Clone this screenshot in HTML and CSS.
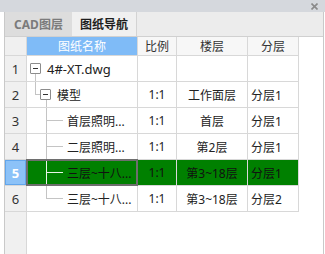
FILE: index.html
```html
<!DOCTYPE html>
<html lang="zh">
<head>
    <meta charset="UTF-8">
    <title>图纸导航</title>
    <link rel="stylesheet" href="styles.css">
</head>
<body>
    <div class="titlebar">
        <svg class="close" width="7" height="7" viewBox="0 0 7 7"><path d="M0.5 0.5 L6.5 6.5 M6.5 0.5 L0.5 6.5" stroke="#8a8a8a" stroke-width="1.6"/></svg>
    </div>
    <div class="panel">
        <div class="tabs">
            <div class="tab">CAD图层</div>
            <div class="tab active">图纸导航</div>
        </div>
        <div class="sheet">
            <div class="row head">
                <div class="num"></div>
                <div class="cell sel-col">图纸名称</div>
                <div class="cell center">比例</div>
                <div class="cell center">楼层</div>
                <div class="cell center">分层</div>
            </div>
            <div class="row">
                <div class="num">1</div>
                <div class="cell name t-root"><span class="toggle"></span>4#-XT.dwg</div>
                <div class="cell center"></div>
                <div class="cell center"></div>
                <div class="cell"></div>
            </div>
            <div class="row">
                <div class="num">2</div>
                <div class="cell name t-group"><span class="toggle"></span>模型</div>
                <div class="cell center">1:1</div>
                <div class="cell center">工作面层</div>
                <div class="cell">分层1</div>
            </div>
            <div class="row">
                <div class="num">3</div>
                <div class="cell name t-leaf">首层照明...</div>
                <div class="cell center">1:1</div>
                <div class="cell center">首层</div>
                <div class="cell">分层1</div>
            </div>
            <div class="row">
                <div class="num">4</div>
                <div class="cell name t-leaf">二层照明...</div>
                <div class="cell center">1:1</div>
                <div class="cell center">第2层</div>
                <div class="cell">分层1</div>
            </div>
            <div class="row selected">
                <div class="num">5</div>
                <div class="cell name t-leaf focus">三层~十八...</div>
                <div class="cell center">1:1</div>
                <div class="cell center">第3~18层</div>
                <div class="cell">分层1</div>
            </div>
            <div class="row">
                <div class="num">6</div>
                <div class="cell name t-last">三层~十八...</div>
                <div class="cell center">1:1</div>
                <div class="cell center">第3~18层</div>
                <div class="cell">分层2</div>
            </div>
        </div>
    </div>
</body>
</html>
```

FILE: styles.css
```css
body {
    margin: 0;
    width: 325px;
    height: 254px;
    overflow: hidden;
    background: #fff;
    font-family: "Noto Sans", "Noto Sans CJK SC", sans-serif;
    font-size: 12px;
    color: #222;
}
.titlebar {
    height: 12px;
    background: #d5d8dd;
    display: flex;
    justify-content: flex-end;
    align-items: center;
    padding-right: 7px;
}
.panel {
    margin-left: 4px;
    margin-right: 1px;
    height: 242px;
    border-left: 1px solid #c9c9c9;
    border-right: 1px solid #c9c9c9;
    display: flex;
    flex-direction: column;
}
.tabs {
    height: 24px;
    background: #ececec;
    border-bottom: 1px solid #d0d0d0;
    display: flex;
}
.tab {
    width: 67px;
    display: flex;
    align-items: center;
    justify-content: center;
    background: #dddddd;
    color: #7b7b7b;
    font-weight: bold;
    font-size: 12px;
}
.tab.active {
    width: 64px;
    background: #f0f0f0;
    color: #1e1e1e;
    border-right: 1px solid #d3d3d3;
}
.sheet {
    flex: 1;
    background: linear-gradient(to right, #f0f0f0 21px, #d8d8d8 21px 22px, #fff 22px);
}
.row {
    display: grid;
    grid-template-columns: 21px 110px 38px 70px 50px;
    grid-template-rows: 25px;
    column-gap: 1px;
    width: fit-content;
    background: #d8d8d8;
    padding: 0 1px 1px 0;
}
.row.head {
    grid-template-rows: 18px;
}
.num {
    background: #f0f0f0;
    color: #333;
    font-size: 13px;
    display: flex;
    align-items: center;
    justify-content: center;
}
.cell {
    background: #fff;
    display: flex;
    align-items: center;
    padding-left: 3px;
    white-space: nowrap;
    overflow: hidden;
}
.cell.center {
    justify-content: center;
    padding-left: 0;
}
.head .cell {
    background: #f7f7f7;
    color: #333;
    justify-content: center;
    padding-left: 0;
}
.head .cell.sel-col {
    background: #7fbbf7;
    color: #fff;
}
.toggle {
    width: 9px;
    height: 9px;
    border: 1px solid #8c8c8c;
    border-radius: 1px;
    background: linear-gradient(#333, #333) center / 5px 1px no-repeat, #fff;
    margin-right: 6px;
    flex: none;
}
.t-root {
    background: linear-gradient(#c4c4c4, #c4c4c4) 8px 100% / 1px 50% no-repeat, #fff;
    font-size: 13px;
}
.t-group {
    padding-left: 13px;
    background:
        linear-gradient(#c4c4c4, #c4c4c4) 8px 0 / 1px 50% no-repeat,
        linear-gradient(#c4c4c4, #c4c4c4) 8px 50% / 5px 1px no-repeat,
        linear-gradient(#c4c4c4, #c4c4c4) 19px 100% / 1px 50% no-repeat,
        #fff;
}
.t-leaf, .t-last {
    padding-left: 40px;
    --line: #c4c4c4;
    background:
        linear-gradient(var(--line), var(--line)) 19px 0 / 1px 100% no-repeat,
        linear-gradient(var(--line), var(--line)) 19px 50% / 17px 1px no-repeat,
        #fff;
}
.t-last {
    background:
        linear-gradient(var(--line), var(--line)) 19px 0 / 1px 50% no-repeat,
        linear-gradient(var(--line), var(--line)) 19px 50% / 17px 1px no-repeat,
        #fff;
}
.selected .num {
    background: #8cc2f8;
    box-shadow: inset 0 0 0 1px #62a6ec;
    color: #fff;
    font-weight: bold;
}
.selected .cell {
    background-color: #008000;
    color: #111;
}
.selected .t-leaf {
    --line: #e8f4e8;
}
.focus {
    outline: 2px solid #6e6e6e;
    outline-offset: -1px;
}
```
